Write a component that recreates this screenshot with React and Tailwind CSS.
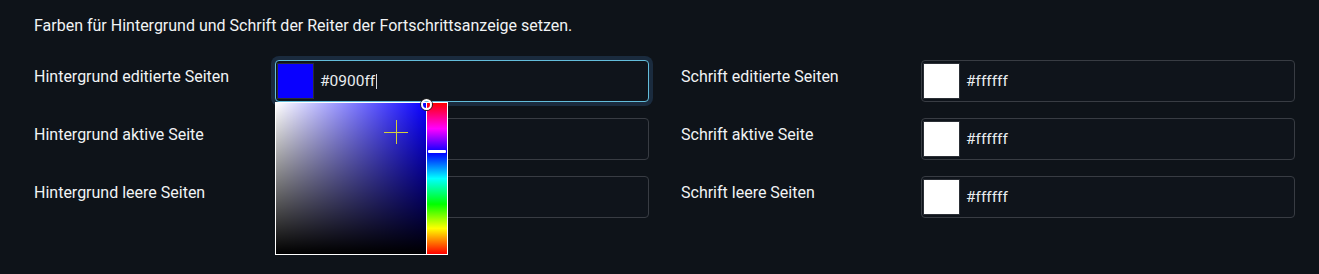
import React from 'react';

const font = { fontFamily: 'Roboto, "Liberation Sans", sans-serif' };

const ColorField = ({ label, labelWidth = 'w-[241px]', value, swatch, focused, children }) => {
  return (
    <div className="flex items-start h-[42px]">
      <div className={`${labelWidth} shrink-0 pt-[5px] text-base leading-6 text-[#f1f3f5]`}>{label}</div>
      <div className="relative w-[374px]">
        <div
          className={`flex items-center h-[42px] rounded-[4px] border bg-[#0f141b] pl-[1px] pr-2 py-[2px] ${
            focused ? 'border-[#63bddb] ring-4 ring-[#1a2b3e]' : 'border-[#383c43]'
          }`}
        >
          <div className="w-[37px] h-[36px] shrink-0 border border-[#2b2f36]" style={{ background: swatch }}></div>
          <span className="ml-[6px] text-[15.5px] leading-6 text-[#e9ecef]">{value}</span>
          {focused && <span className="ml-[1px] w-px h-[15px] bg-[#d6dadf]"></span>}
        </div>
        {children}
      </div>
    </div>
  );
};

const Picker = () => {
  return (
    <div className="absolute left-0 top-full z-10 flex w-[173px] h-[153px] border border-white bg-white">
      {/* saturation / value area */}
      <div
        className="relative w-[150px] h-full"
        style={{
          background:
            'linear-gradient(to bottom, rgba(0,0,0,0), #000), linear-gradient(to right, #fff, rgba(255,255,255,0)), #0900ff',
        }}
      >
        <div className="absolute left-[108px] top-[29px] w-[24px] h-px bg-[#d3cf3c]"></div>
        <div className="absolute left-[120px] top-[17px] w-px h-[24px] bg-[#d3cf3c]"></div>
      </div>
      {/* hue bar */}
      <div
        className="relative ml-px w-[20px] h-full"
        style={{
          background:
            'linear-gradient(to bottom, #ff0000 0%, #ff00ff 17%, #0000ff 33%, #00ffff 50%, #00ff00 67%, #ffff00 83%, #ff0000 100%)',
        }}
      >
        <div className="absolute left-[1px] right-[1px] top-[47px] h-[3px] rounded-[1px] bg-white"></div>
      </div>
      <div className="absolute left-[145px] top-[-4px] w-[11px] h-[11px] rounded-full border-2 border-white shadow-[0_0_0_1px_#222]"></div>
    </div>
  );
};

export default function App() {
  return (
    <div className="w-[1319px] h-[274px] bg-[#0e1319] pl-[34px] pt-[14px]" style={font}>
      <p className="text-base leading-6 text-[#f1f3f5]">
        Farben für Hintergrund und Schrift der Reiter der Fortschrittsanzeige setzen.
      </p>
      <div className="mt-[22px] flex gap-[32px]">
        <div className="flex flex-col gap-[16px]">
          <ColorField label="Hintergrund editierte Seiten" value="#0900ff" swatch="#0900ff" focused>
            <Picker />
          </ColorField>
          <ColorField label="Hintergrund aktive Seite" value="#ffffff" swatch="#ffffff" />
          <ColorField label="Hintergrund leere Seiten" value="#ffffff" swatch="#ffffff" />
        </div>
        <div className="flex flex-col gap-[16px]">
          <ColorField label="Schrift editierte Seiten" labelWidth="w-[240px]" value="#ffffff" swatch="#ffffff" />
          <ColorField label="Schrift aktive Seite" labelWidth="w-[240px]" value="#ffffff" swatch="#ffffff" />
          <ColorField label="Schrift leere Seiten" labelWidth="w-[240px]" value="#ffffff" swatch="#ffffff" />
        </div>
      </div>
    </div>
  );
}
